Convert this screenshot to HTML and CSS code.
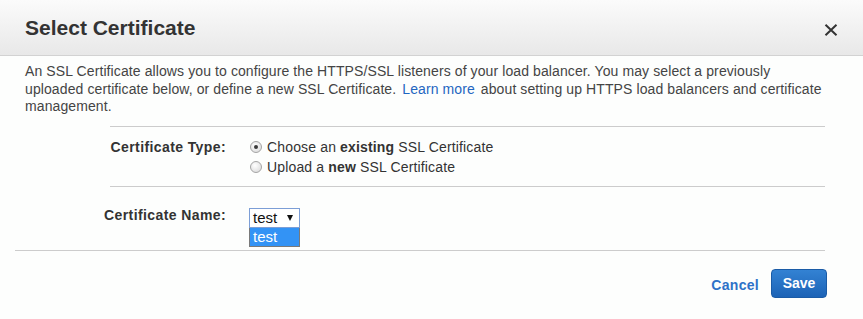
FILE: index.html
```html
<!DOCTYPE html>
<html lang="en">
<head>
    <meta charset="UTF-8">
    <meta name="viewport" content="width=device-width, initial-scale=1.0">
    <title>Select Certificate</title>
    <link rel="stylesheet" href="styles.css">
</head>
<body>
    <div class="dialog">
        <!-- Header -->
        <div class="dialog-header">
            <h1 class="dialog-title">Select Certificate</h1>
            <button class="close-btn" aria-label="Close">
                <svg width="14" height="12" viewBox="0 0 14 12">
                    <path d="M1.5 0.8 L12.5 11.2 M12.5 0.8 L1.5 11.2" stroke="#333" stroke-width="2" fill="none"/>
                </svg>
            </button>
        </div>

        <p class="intro">
            An SSL Certificate allows you to configure the HTTPS/SSL listeners of your load balancer. You may select a previously
            uploaded certificate below, or define a new SSL Certificate. <a href="#" class="link">Learn more</a> about setting up HTTPS load balancers and certificate
            management.
        </p>

        <!-- Form rows -->
        <div class="form">
            <div class="form-row type-row">
                <div class="form-label">Certificate Type:</div>
                <div class="form-field">
                    <label class="radio-line">
                        <span class="radio checked"></span>
                        <span>Choose an <b>existing</b> SSL Certificate</span>
                    </label>
                    <label class="radio-line">
                        <span class="radio"></span>
                        <span>Upload a <b>new</b> SSL Certificate</span>
                    </label>
                </div>
            </div>
            <div class="form-row name-row">
                <div class="form-label">Certificate Name:</div>
                <div class="form-field">
                    <div class="select">
                        <span class="select-value">test</span>
                        <span class="select-arrow"></span>
                        <div class="select-menu">
                            <div class="select-option">test</div>
                        </div>
                    </div>
                </div>
            </div>
        </div>

        <div class="divider"></div>

        <!-- Footer -->
        <div class="dialog-footer">
            <a href="#" class="cancel">Cancel</a>
            <button class="save-btn">Save</button>
        </div>
    </div>
</body>
</html>
```

FILE: styles.css
```css
* {
    margin: 0;
    padding: 0;
    box-sizing: border-box;
}

body {
    background-color: #fdfefd;
    font-family: "Liberation Sans", Arial, sans-serif;
    color: #444;
}

.dialog {
    width: 863px;
    height: 319px;
}

.dialog-header {
    height: 56px;
    display: flex;
    align-items: center;
    justify-content: space-between;
    padding: 0 25px;
    background: linear-gradient(#fbfbfb, #e8e8e8);
    border-bottom: 1px solid #d2d2d2;
}

.dialog-title {
    font-size: 21px;
    font-weight: bold;
    color: #333;
}

.close-btn {
    border: none;
    background: none;
    display: flex;
    margin-top: 5px;
    cursor: pointer;
}

.intro {
    font-size: 14px;
    line-height: 17.5px;
    letter-spacing: 0.1px;
    padding: 7px 38px 0 25px;
    margin-bottom: 10px;
}

.link {
    color: #1f66c1;
    text-decoration: none;
    margin: 0 2px;
}

.form {
    margin: 0 38px 0 110px;
}

.form-row {
    display: flex;
    border-top: 1px solid #cccccc;
    font-size: 14px;
    line-height: 20px;
}

.type-row {
    padding: 10px 0 9px;
}

.name-row {
    padding: 18px 0 22px;
}

.form-label {
    width: 116px;
    flex-shrink: 0;
    display: flex;
    justify-content: flex-end;
    white-space: nowrap;
    font-weight: bold;
    letter-spacing: 0.4px;
    color: #333;
}

.form-field {
    margin-left: 23px;
}

.radio-line {
    display: flex;
    align-items: center;
    color: #333;
    letter-spacing: 0.15px;
}

.radio {
    width: 12px;
    height: 12px;
    border-radius: 50%;
    border: 1px solid #a4a4a4;
    background: radial-gradient(circle at 40% 35%, #ffffff, #d6d6d6);
    margin: 1px 5px 0 1px;
    position: relative;
}

.radio.checked::after {
    content: "";
    position: absolute;
    top: 3px;
    left: 3px;
    width: 4px;
    height: 4px;
    border-radius: 50%;
    background: #3a3a3a;
}

.select {
    position: relative;
    width: 51px;
    height: 20px;
    margin-top: 3px;
    border: 1px solid #7c9ed6;
    background: #fff;
    display: flex;
    align-items: center;
    font-size: 15px;
    color: #111;
    padding-left: 3px;
}

.select-arrow {
    margin-left: 10px;
    margin-top: 1px;
    border-left: 3px solid transparent;
    border-right: 3px solid transparent;
    border-top: 6px solid #111;
}

.select-menu {
    position: absolute;
    top: 19px;
    left: -1px;
    width: 51px;
    height: 19px;
    border: 1px solid #7a7a7a;
    border-top: none;
    background: #3393f5;
}

.select-option {
    color: #fff;
    font-size: 15px;
    line-height: 18px;
    padding-left: 3px;
}

.divider {
    margin: 0 38px 0 15px;
    border-top: 1px solid #cccccc;
}

.dialog-footer {
    display: flex;
    justify-content: flex-end;
    align-items: center;
    padding: 18px 36px 0 0;
}

.cancel {
    color: #2d72c8;
    font-size: 14px;
    font-weight: bold;
    letter-spacing: 0.3px;
    text-decoration: none;
    margin-top: 4px;
    margin-right: 12px;
}

.save-btn {
    width: 56px;
    height: 29px;
    border: 1px solid #1a5ba6;
    border-radius: 4px;
    background: linear-gradient(#3382d3, #1c63b6);
    color: #fff;
    font-family: "Liberation Sans", Arial, sans-serif;
    font-size: 14px;
    font-weight: bold;
    cursor: pointer;
}
```
